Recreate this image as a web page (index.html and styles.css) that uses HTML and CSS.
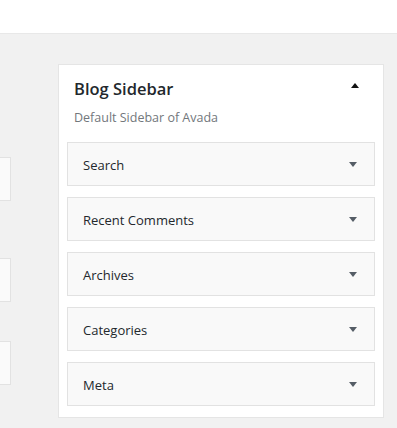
FILE: index.html
```html
<!DOCTYPE html>
<html lang="en">
  <head>
    <meta charset="UTF-8" />
    <meta name="viewport" content="width=device-width, initial-scale=1.0" />
    <title>Widgets</title>
    <link rel="stylesheet" href="styles.css">
  </head>
  <body>
    <header class="topbar"></header>

    <main class="widgets">
      <div class="available">
        <div class="stub stub-1"></div>
        <div class="stub stub-2"></div>
        <div class="stub stub-3"></div>
      </div>

      <section class="sidebar">
        <div class="sidebar-head">
          <h2>Blog Sidebar</h2>
          <span class="toggle up"></span>
        </div>
        <p class="sidebar-desc">Default Sidebar of Avada</p>

        <ul class="widget-list">
          <li class="widget"><span>Search</span><span class="toggle down"></span></li>
          <li class="widget"><span>Recent Comments</span><span class="toggle down"></span></li>
          <li class="widget"><span>Archives</span><span class="toggle down"></span></li>
          <li class="widget"><span>Categories</span><span class="toggle down"></span></li>
          <li class="widget"><span>Meta</span><span class="toggle down"></span></li>
        </ul>
      </section>
    </main>
  </body>
</html>
```

FILE: styles.css
```css
body {
  margin: 0;
  background-color: #f1f1f1;
  font-family: "Open Sans", "Noto Sans", sans-serif;
  color: #23282d;
}

.topbar {
  height: 33px;
  background-color: #fff;
  border-bottom: 1px solid #e8e8e8;
}

.widgets {
  display: flex;
  gap: 47px;
  padding-top: 30px;
}

/* widgets on the left, cut off by the window */

.available {
  width: 11px;
  flex: none;
}

.stub {
  height: 44px;
  box-sizing: border-box;
  background-color: #fafafa;
  border: 1px solid #e2e2e2;
  border-left: none;
}

.stub-1 {
  margin-top: 93px;
}

.stub-2 {
  margin-top: 57px;
}

.stub-3 {
  margin-top: 39px;
}

/* sidebar */

.sidebar {
  width: 326px;
  box-sizing: border-box;
  background-color: #fff;
  border: 1px solid #e5e5e5;
  padding: 12px 8px 11px;
}

.sidebar-head {
  display: flex;
  align-items: center;
  justify-content: space-between;
  padding: 0 16px 0 7px;
}

.sidebar-head h2 {
  margin: 0;
  font-size: 16.5px;
  line-height: 24px;
  font-weight: 600;
}

.sidebar-desc {
  margin: 8px 0 15px;
  padding-left: 7px;
  font-size: 12.5px;
  line-height: 18px;
  color: #72777c;
}

.widget-list {
  list-style: none;
  margin: 0;
  padding: 0;
  display: flex;
  flex-direction: column;
  gap: 11px;
}

.widget {
  height: 44px;
  box-sizing: border-box;
  display: flex;
  align-items: center;
  justify-content: space-between;
  padding: 1px 17px 0 15px;
  background-color: #f9f9f9;
  border: 1px solid #e2e2e2;
  font-size: 13px;
}

.toggle {
  width: 0;
  height: 0;
  border-left: 4px solid transparent;
  border-right: 4px solid transparent;
}

.toggle.up {
  border-bottom: 5px solid #111;
  margin-top: -8px;
}

.toggle.down {
  border-top: 5px solid #555d66;
}
```
